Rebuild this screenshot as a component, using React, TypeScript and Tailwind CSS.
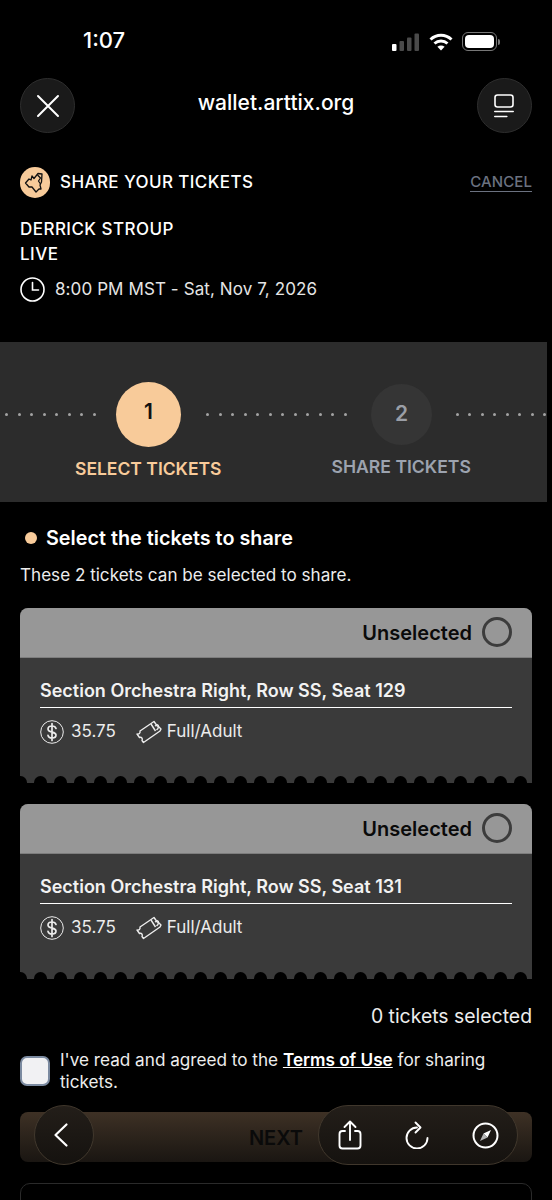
import React from "react";

const tickets = [
  { seat: "Section Orchestra Right, Row SS, Seat 129" },
  { seat: "Section Orchestra Right, Row SS, Seat 131" },
];

const domes = Array.from({ length: 26 }, (_, i) => i);

function Dots({ count, className }: { count: number; className: string }) {
  return (
    <div className={`flex shrink-0 justify-between ${className}`}>
      {Array.from({ length: count }, (_, i) => (
        <span key={i} className="h-[3px] w-[3px] rounded-full bg-[#a3a3a3]" />
      ))}
    </div>
  );
}

function StatusBar() {
  return (
    <div className="flex h-[78px] items-start pl-[83px] pr-[52px] pt-[27px]">
      <span className="text-[22px] leading-[27px] font-medium text-white">1:07</span>
      <div className="ml-auto flex items-center gap-[9px] pt-[5px]">
        <svg width="28" height="18" viewBox="0 0 28 18">
          <rect x="0" y="11" width="4.5" height="7" rx="1" fill="#fff" />
          <rect x="7.5" y="8" width="4.5" height="10" rx="1" fill="#4a4a4a" />
          <rect x="15" y="4.5" width="4.5" height="13.5" rx="1" fill="#4a4a4a" />
          <rect x="22.5" y="0.5" width="4.5" height="17.5" rx="1" fill="#4a4a4a" />
        </svg>
        <svg width="24" height="18" viewBox="0 0 24 18" fill="none" stroke="#fff" strokeWidth="3">
          <path d="M1.5 6.5c6-5.6 15-5.6 21 0" />
          <path d="M5.5 10.5c3.7-3.3 9.3-3.3 13 0" />
          <path d="M12 17.5l-3.6-3.8c2-1.6 5.200-1.600 7.200 0z" fill="#fff" stroke="none" />
        </svg>
        <div className="flex items-center">
          <div className="flex h-[19px] w-[35px] items-center rounded-[6px] border border-[#777] p-[2px]">
            <div className="h-full w-full rounded-[4px] bg-white" />
          </div>
          <div className="ml-[1px] h-[6px] w-[2px] rounded-r-full bg-[#777]" />
        </div>
      </div>
    </div>
  );
}

function NavBar() {
  return (
    <div className="flex items-center justify-between px-[20px]">
      <button className="flex h-[55px] w-[55px] items-center justify-center rounded-full border border-[#2e2e2e] bg-[#1a1a1a]">
        <svg width="24" height="24" viewBox="0 0 24 24" fill="none" stroke="#fff" strokeWidth="2" strokeLinecap="round">
          <path d="M2 2l20 20M22 2L2 22" />
        </svg>
      </button>
      <span className="mb-[6px] text-[21px] font-medium text-white">wallet.arttix.org</span>
      <button className="flex h-[55px] w-[55px] items-center justify-center rounded-full border border-[#2e2e2e] bg-[#1a1a1a]">
        <svg width="20" height="24" viewBox="0 0 20 24" fill="none" stroke="#fff" strokeWidth="1.6" strokeLinecap="round">
          <rect x="1" y="1" width="18" height="12" rx="2.5" />
          <path d="M0.800 17.500h18.400M0.800 22.500h12" />
        </svg>
      </button>
    </div>
  );
}

function TicketCard({ seat }: { seat: string }) {
  return (
    <div className="relative h-[175px] overflow-hidden rounded-t-[8px] bg-[#3a3a3a]">
      <div className="flex h-[50px] items-center justify-end gap-[10px] border-b border-[#7d7d7d] bg-[#979797] pr-[20px]">
        <span className="pt-[2px] text-[20px] font-semibold text-[#0a0a0a]">Unselected</span>
        <span className="h-[30px] w-[30px] rounded-full border-[3.5px] border-[#3c3c3c]" />
      </div>
      <div className="px-[20px] pt-[20px]">
        <div className="border-b-[1.5px] border-white pb-[3.500px] text-[18px] leading-[26px] font-semibold text-[#f2f2f2]">
          {seat}
        </div>
        <div className="mt-[11px] flex items-center text-[17px] text-[#ececec]">
          <svg width="24" height="24" viewBox="0 0 24 24" fill="none" stroke="#ececec" className="shrink-0">
            <circle cx="12" cy="12" r="11.300" strokeWidth="1" />
            <path d="M16 8.500c-.5-1.700-2-2.500-4-2.500-2.300 0-4 1.200-4 3s1.600 2.600 4 3.100 4 1.200 4 3-1.700 3-4 3c-2.100 0-3.600-.9-4-2.700M12 3.500v17" strokeWidth="1.700" strokeLinecap="round" />
          </svg>
          <span className="ml-[7px]">35.75</span>
          <svg width="26" height="24" viewBox="0 0 26 24" fill="none" stroke="#ececec" strokeWidth="1.400" strokeLinejoin="round" className="ml-[20px] shrink-0">
            <path d="M1 14c2 .6 3.500-.8 3-3L18 1.500l2.500 3.500c1-.5 2 0 2 1.500l2.500 2.500-1 2-16.500 11.500-1.500-2c1-2-.5-3.800-2.500-3z" />
            <path d="M15 4l4.500 7M19 6c2-1.500 4 .5 3 2.500l-1.500 1.500" />
          </svg>
          <span className="ml-[5px]">Full/Adult</span>
        </div>
      </div>
      <div className="absolute bottom-0 left-[-6px] flex h-[7px] gap-[7px]">
        {domes.map((d) => (
          <span key={d} className="h-[7px] w-[13px] shrink-0 rounded-t-full bg-black" />
        ))}
      </div>
    </div>
  );
}

export default function App() {
  return (
    <div className="relative h-[1200px] w-[552px] overflow-hidden bg-black font-['Inter',sans-serif] text-white">
      <StatusBar />
      <NavBar />

      <div className="mt-[34px] flex items-center px-[20px]">
        <span className="flex h-[31px] w-[30px] items-center justify-center rounded-full bg-[#f8cb9a]">
          <svg width="22" height="22" viewBox="0 0 22 22" fill="none" stroke="#111" strokeWidth="1.300" strokeLinejoin="round">
            <path d="M1.500 11L5 7l2 1 1-4 2 2.500L12 4l2-2.500 4 .5-.5 8L16 13l1 4h-2l-3 3-4-5H5z" />
            <path d="M13.500 3l3 3-2 3 2 3" />
          </svg>
        </span>
        <span className="ml-[10px] text-[17px] font-medium tracking-[0.4px]">SHARE YOUR TICKETS</span>
        <span className="ml-auto border-b border-[#6b7280] text-[15px] leading-[18px] font-medium tracking-[0.1px] text-[#6b7280]">CANCEL</span>
      </div>

      <div className="mt-[19px] px-[20px] text-[17px] leading-[25px] font-medium tracking-[0.45px]">
        <div>DERRICK STROUP</div>
        <div>LIVE</div>
      </div>
      <div className="mt-[10px] flex items-center px-[20px] text-[17px] tracking-[0.1px] text-[#e5e5e5]">
        <svg width="25" height="25" viewBox="0 0 25 25" fill="none" stroke="#fff" strokeWidth="1.600" strokeLinecap="round">
          <circle cx="12.500" cy="12.500" r="11.500" />
          <path d="M12.500 5.500v7.500h6" />
        </svg>
        <span className="ml-[10px]">8:00 PM MST - Sat, Nov 7, 2026</span>
      </div>

      <div className="mt-[39px] h-[160px] w-[547px] bg-[#2c2c2c]">
        <div className="flex items-center pt-[40px] pl-[5px]">
          <Dots count={8} className="w-[91px]" />
          <span className="ml-[20px] flex h-[65px] w-[65px] items-center justify-center rounded-full bg-[#f8cb9a] pb-[4px] text-[21px] font-semibold text-[#111]">1</span>
          <Dots count={12} className="ml-[25px] w-[141px]" />
          <span className="ml-[24px] flex h-[61px] w-[61px] items-center justify-center rounded-full bg-[#353535] text-[21px] font-semibold text-[#9a9ea6]">2</span>
          <Dots count={8} className="ml-[24px] w-[90px]" />
        </div>
        <div className="mt-[9px] flex items-start pl-[75px]">
          <span className="text-[17.500px] leading-[26px] font-semibold text-[#f8cb9a]">SELECT TICKETS</span>
          <span className="ml-[110px] -mt-[2px] text-[17.600px] leading-[26px] font-semibold text-[#9ca3af]">SHARE TICKETS</span>
        </div>
      </div>

      <div className="px-[20px]">
        <div className="mt-[23px] flex items-center pl-[5px]">
          <span className="h-[12px] w-[12px] rounded-full bg-[#f8cb9a]" />
          <span className="ml-[9px] text-[19.800px] leading-[26px] font-semibold">Select the tickets to share</span>
        </div>
        <p className="mt-[12px] text-[17.100px] leading-[24px] text-[#ededed]">These 2 tickets can be selected to share.</p>

        <div className="mt-[21px] flex flex-col gap-[21px]">
          {tickets.map((t) => (
            <TicketCard key={t.seat} seat={t.seat} />
          ))}
        </div>

        <div className="mt-[24px] text-right text-[19.400px] leading-[26px] text-[#ededed]">0 tickets selected</div>

        <div className="mt-[20px] flex items-center">
          <span className="h-[30px] w-[30px] shrink-0 rounded-[7px] border-2 border-[#7b8aa0] bg-[#f1f1f3]" />
          <p className="ml-[10px] text-[17.150px] leading-[22px] text-[#ededed]">
            I've read and agreed to the <span className="font-semibold text-white underline">Terms of Use</span> for sharing tickets.
          </p>
        </div>

        <button className="mt-[19px] flex h-[50px] w-full items-center justify-center rounded-[8px] bg-gradient-to-b from-[#3e3125] to-[#1a1612] pt-[2px] text-[20px] font-semibold text-[#0a0a0a]">
          NEXT
        </button>

        <div className="mt-[21px] h-[60px] rounded-[10px] border border-[#2a2a2a]" />
      </div>

      <button className="absolute left-[34px] top-[1105px] flex h-[60px] w-[60px] items-center justify-center rounded-full border border-[#40372c] bg-gradient-to-b from-[#231e19] to-[#15120f] pr-[6px]">
        <svg width="16" height="26" viewBox="0 0 16 26" fill="none" stroke="#fff" strokeWidth="2.200" strokeLinecap="round" strokeLinejoin="round">
          <path d="M13.500 2.500L2.500 13l11 10.500" />
        </svg>
      </button>

      <div className="absolute left-[318px] top-[1105px] flex h-[60px] w-[200px] items-center rounded-full border border-[#40372c] bg-gradient-to-b from-[#231e19] to-[#15120f] pl-[19px]">
        <svg width="24" height="30" viewBox="0 0 24 30" fill="none" stroke="#fff" strokeWidth="1.900" strokeLinecap="round" strokeLinejoin="round">
          <path d="M7 11H4.500A3 3 0 0 0 1.500 14v11.500a3 3 0 0 0 3 3h15a3 3 0 0 0 3-3V14a3 3 0 0 0-3-3H17" />
          <path d="M12 20V2M6.500 7L12 1.500 17.500 7" />
        </svg>
        <svg width="24" height="28" viewBox="0 0 24 28" fill="none" stroke="#fff" strokeWidth="1.900" strokeLinecap="round" strokeLinejoin="round" className="ml-[43px]">
          <path d="M12 6.500A10.500 10.500 0 1 0 22.500 17" />
          <path d="M10.500 1.500L15.500 6.500l-5 5" />
        </svg>
        <svg width="27" height="27" viewBox="0 0 27 27" fill="none" stroke="#fff" strokeWidth="2" className="ml-[43px]">
          <circle cx="13.500" cy="13.500" r="12" />
          <path d="M19 8l-3.500 7.500-4-4z" fill="#fff" stroke="none" />
          <path d="M8 19l3.500-7.500 4 4z" fill="#b5b5b5" stroke="none" />
        </svg>
      </div>
    </div>
  );
}
